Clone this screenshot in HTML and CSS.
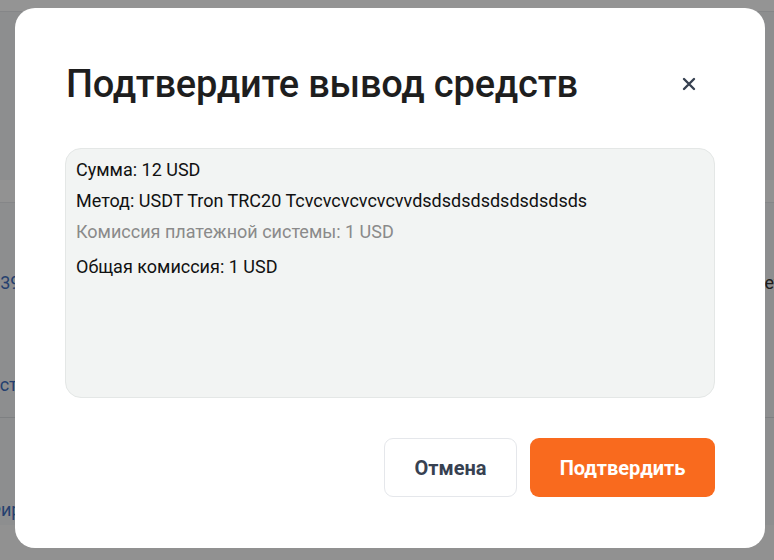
FILE: index.html
```html
<!DOCTYPE html>
<html lang="ru">
<head>
<meta charset="utf-8">
<title>Подтвердите вывод средств</title>
<link rel="stylesheet" href="styles.css">
</head>
<body>
<div class="page">
  <div class="topbar"></div>
  <div class="page-body">
    <div class="card-head"><div class="thead"></div></div>
    <div class="row row-a"><span class="link cut-a">3939</span><span class="dark cut-r">Wallet</span></div>
    <div class="row row-b"><span class="link cut-b">Настройки</span></div>
    <div class="row row-c"><span class="link cut-c">Фирма</span></div>
  </div>
  <div class="footer"></div>
</div>

<div class="overlay"></div>

<div class="modal" role="dialog" aria-modal="true">
  <div class="modal-head">
    <h2 class="modal-title">Подтвердите вывод средств</h2>
    <button class="close" aria-label="Закрыть">
      <svg width="14" height="14" viewBox="0 0 14 14"><path d="M2 2 L12 12 M12 2 L2 12" stroke="#374151" stroke-width="2.4" stroke-linecap="round" fill="none"/></svg>
    </button>
  </div>
  <div class="info">
    <p class="line">Сумма: 12 USD</p>
    <p class="line">Метод: USDT Tron TRC20 Tcvcvcvcvcvcvvdsdsdsdsdsdsdsdsds</p>
    <p class="line muted">Комиссия платежной системы: 1 USD</p>
    <p class="line total">Общая комиссия: 1 USD</p>
  </div>
  <div class="actions">
    <button class="btn btn-cancel">Отмена</button>
    <button class="btn btn-confirm">Подтвердить</button>
  </div>
</div>
</body>
</html>
```

FILE: styles.css
```css
* { box-sizing: border-box; }
html, body { margin: 0; padding: 0; }
body {
  font-family: Roboto, "Liberation Sans", Arial, sans-serif;
  background: #f3f4f6;
  width: 774px;
  height: 560px;
  overflow: hidden;
}

.page { display: flex; flex-direction: column; height: 560px; }
.topbar { height: 12px; background: #ffffff; border-bottom: 1px solid #e5e7eb; }
.page-body { flex: 1; display: flex; flex-direction: column; overflow: hidden; }
.card-head {
  height: 191px;
  border-bottom: 1px solid #e5e7eb;
  background: #f3f4f6;
  display: flex;
  flex-direction: column;
  justify-content: flex-end;
}
.thead { height: 22px; background: #fbfbfb; }
.row {
  display: flex;
  justify-content: space-between;
  align-items: center;
  font-size: 18px;
  line-height: 22px;
}
.row-a { height: 160px; }
.row-b { height: 55px; border-bottom: 1px solid #d9dce1; align-items: flex-start; padding-top: 11px; }
.row-c { flex: 1; align-items: flex-end; padding-bottom: 4px; }
.link { color: #3f6fc0; }
.dark { color: #333333; }
.cut-a { margin-left: -20px; }
.cut-r { margin-right: -6px; }
.cut-b { margin-left: -23px; }
.cut-c { margin-left: -13px; }
.footer { height: 35px; background: #fafafa; }

.overlay {
  position: fixed;
  inset: 0;
  background: rgba(0, 0, 0, 0.42);
}

.modal {
  position: fixed;
  left: 15px;
  top: 8px;
  width: 750px;
  height: 540px;
  background: #ffffff;
  border-radius: 20px;
  padding: 51px 50px 51px 50px;
  display: flex;
  flex-direction: column;
}

.modal-head {
  height: 50px;
  display: flex;
  align-items: center;
  justify-content: space-between;
}
.modal-title {
  margin: 0;
  font-size: 38px;
  line-height: 50px;
  font-weight: 500;
  color: #1e1e1e;
  letter-spacing: -0.2px;
  padding-left: 1px;
}
.close {
  border: 0;
  background: transparent;
  padding: 0;
  width: 24px;
  height: 24px;
  display: flex;
  align-items: center;
  justify-content: center;
  margin-right: 14px;
}

.info {
  margin-top: 39px;
  height: 250px;
  background: #f2f4f3;
  border: 1px solid #e4e7e6;
  border-radius: 16px;
  padding: 9px 10px;
}
.line {
  margin: 0 0 7px 0;
  font-size: 18px;
  line-height: 24px;
  color: #111111;
}
.muted { color: #8a8a8a; margin-bottom: 11px; }

.actions {
  margin-top: 40px;
  display: flex;
  justify-content: flex-end;
  gap: 13px;
}
.btn {
  height: 59px;
  padding: 0;
  border-radius: 9px;
  font-family: Roboto, "Liberation Sans", Arial, sans-serif;
  font-size: 20px;
  font-weight: 700;
}
.btn-cancel {
  width: 133px;
  background: #ffffff;
  border: 1px solid #e5e7eb;
  color: #374151;
}
.btn-confirm {
  width: 185px;
  background: #f96a1e;
  border: 0;
  color: #ffffff;
}
```
